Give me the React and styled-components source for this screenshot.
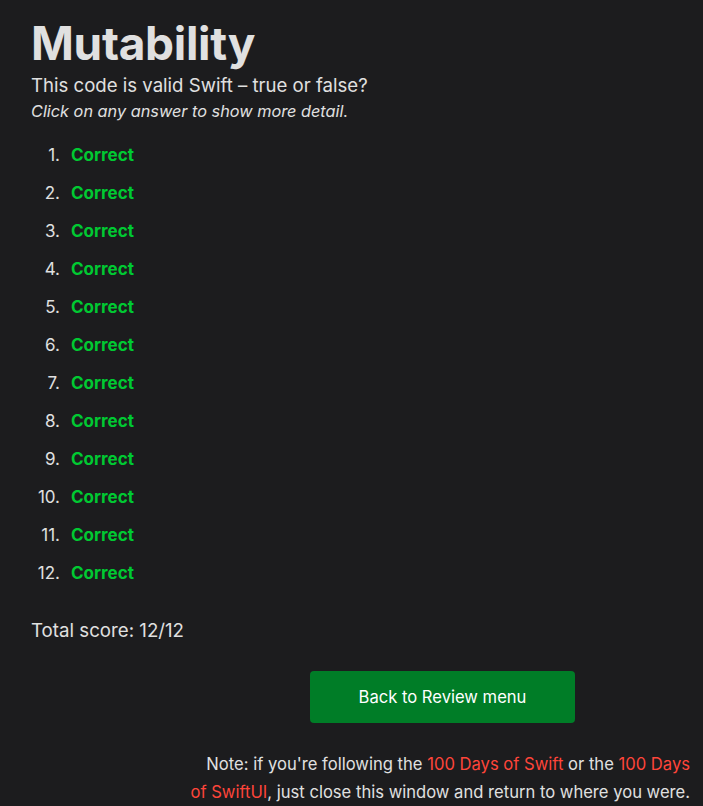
import React from 'react';
import styled, { createGlobalStyle } from 'styled-components';

const GlobalStyle = createGlobalStyle`
  html, body {
    margin: 0;
    padding: 0;
    background: #1c1c1e;
  }
  body {
    font-family: Inter, "Noto Sans", sans-serif;
    color: #e0e0e0;
  }
`;

const Page = styled.main`
  padding: 14px 13px 0 31px;
  min-height: 806px;
  box-sizing: border-box;
`;

const Title = styled.h1`
  margin: 0;
  font-size: 46px;
  font-weight: 700;
  line-height: 58px;
  letter-spacing: -0.3px;
`;

const Question = styled.p`
  margin: 0;
  font-size: 18.6px;
  line-height: 26px;
`;

const Hint = styled.p`
  margin: 0;
  font-size: 16.3px;
  line-height: 26px;
  font-style: italic;
`;

const Answers = styled.ol`
  margin: 12px 0 0;
  padding: 0;
  list-style: none;
  font-size: 17px;
  line-height: 38px;
`;

const Answer = styled.li`
  display: flex;
  gap: 11px;
`;

const Num = styled.span`
  width: 29px;
  text-align: right;
`;

const Verdict = styled.a`
  color: ${p => (p.$ok ? '#00c932' : '#ff453a')};
  font-weight: 700;
  text-decoration: none;
  cursor: pointer;
`;

const Score = styled.p`
  margin: 26px 0 0;
  font-size: 18.7px;
  line-height: 26px;
`;

const Footer = styled.div`
  width: 520px;
  margin-left: auto;
`;

const ButtonRow = styled.div`
  display: flex;
  justify-content: center;
  margin-top: 27px;
  padding-left: 25px;
`;

const BackButton = styled.a`
  display: flex;
  align-items: center;
  justify-content: center;
  width: 265px;
  height: 52px;
  background: #007d27;
  color: #fff;
  border-radius: 4px;
  font-size: 16.6px;
  text-decoration: none;
  cursor: pointer;
`;

const Note = styled.p`
  margin: 27px 0 0;
  text-align: right;
  font-size: 16.6px;
  line-height: 28px;
`;

const Link = styled.a`
  color: #ff453a;
  text-decoration: none;
`;

const results = Array.from({ length: 12 }, () => true);

export default function App() {
  return (
    <>
      <GlobalStyle />
      <Page>
        <Title>Mutability</Title>
        <Question>This code is valid Swift – true or false?</Question>
        <Hint>Click on any answer to show more detail.</Hint>
        <Answers>
          {results.map((ok, i) => (
            <Answer key={i}>
              <Num>{i + 1}.</Num>
              <Verdict $ok={ok}>{ok ? 'Correct' : 'Wrong'}</Verdict>
            </Answer>
          ))}
        </Answers>
        <Score>Total score: 12/12</Score>
        <Footer>
          <ButtonRow>
            <BackButton>Back to Review menu</BackButton>
          </ButtonRow>
          <Note>
            Note: if you're following the <Link>100 Days of Swift</Link> or the <Link>100 Days</Link>
            <br />
            <Link>of SwiftUI</Link>, just close this window and return to where you were.
          </Note>
        </Footer>
      </Page>
    </>
  );
}
